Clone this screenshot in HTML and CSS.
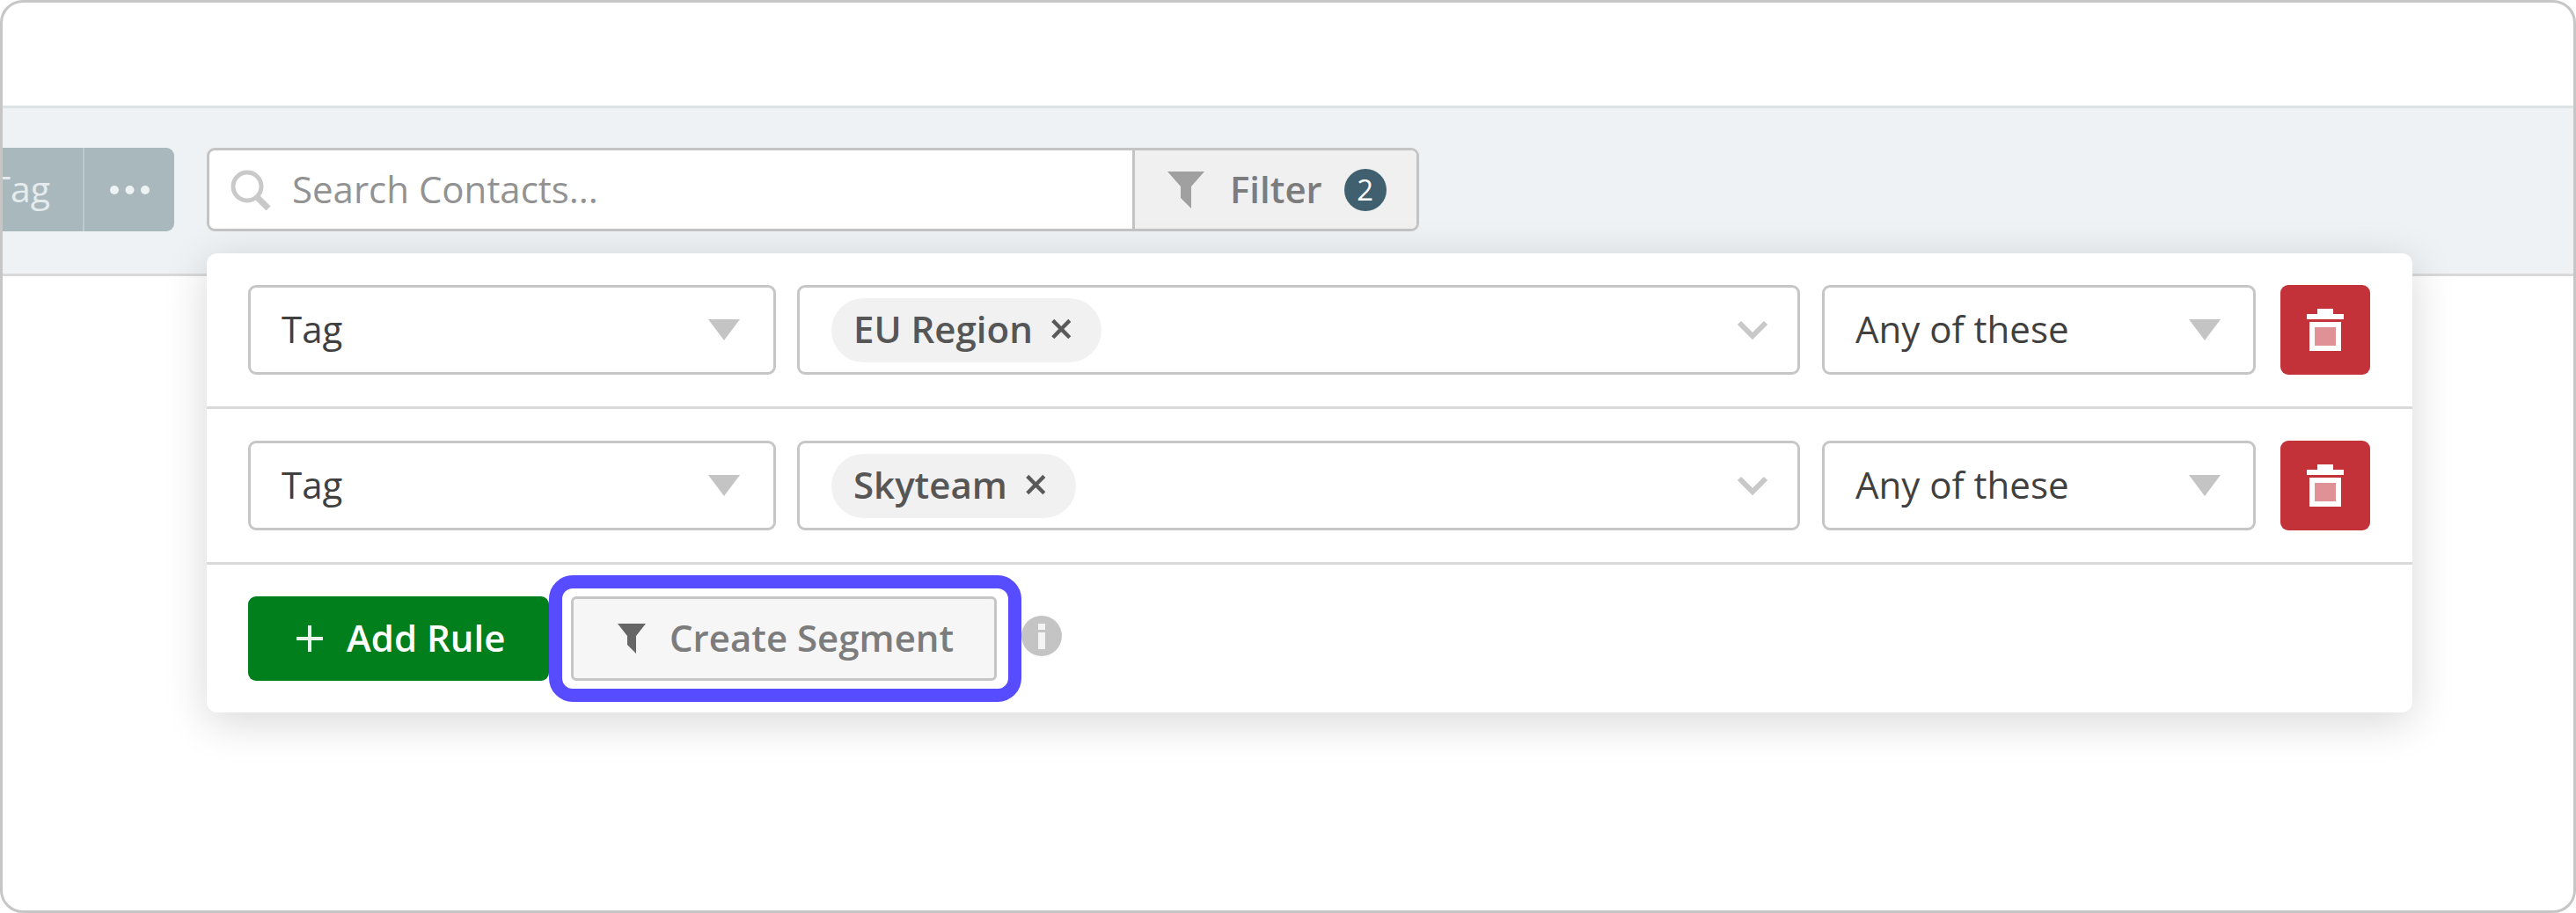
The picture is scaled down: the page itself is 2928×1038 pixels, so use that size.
FILE: index.html
```html
<!DOCTYPE html>
<html lang="en">
<head>
<meta charset="utf-8">
<title>Contacts filter</title>
<link rel="stylesheet" href="styles.css">
</head>
<body>
<div class="frame">
  <div class="top-space"></div>
  <div class="toolbar">
    <div class="bulk-clip">
      <div class="bulk">
        <span class="bulk-tag">Add Tag</span>
        <span class="bulk-more">
          <svg class="dots" viewBox="0 0 45 10"><circle cx="5" cy="5" r="5"/><circle cx="22.5" cy="5" r="5"/><circle cx="40" cy="5" r="5"/></svg>
        </span>
      </div>
    </div>
    <div class="filter-wrap">
      <div class="combo">
        <div class="search">
          <svg class="search-icon" viewBox="0 0 46 46"><circle cx="19" cy="19" r="16" /><path d="M30 31 L43 44" class="handle"/></svg>
          <span class="placeholder">Search Contacts...</span>
        </div>
        <div class="filter-btn">
          <svg class="funnel" viewBox="0 0 42 42"><path d="M0 0H42L27 17V42L15 30V17Z"/></svg>
          <span class="filter-label">Filter</span>
          <span class="badge">2</span>
        </div>
      </div>
      <div class="panel">
        <div class="rule">
          <div class="select type"><span>Tag</span><i class="tri"></i></div>
          <div class="select values">
            <span class="chip">EU Region<b class="chip-x">×</b></span>
            <svg class="chev" viewBox="0 0 36 22"><path d="M3 3 L18 18 L33 3"/></svg>
          </div>
          <div class="select match"><span>Any of these</span><i class="tri"></i></div>
          <div class="trash">
            <svg viewBox="0 0 42 48"><path class="t-w" d="M12 0H30V6H42V12H0V6H12Z"/><rect class="t-w" x="3" y="15" width="36" height="33"/><rect class="t-i" x="9" y="21" width="24" height="21"/></svg>
          </div>
        </div>
        <div class="rule">
          <div class="select type"><span>Tag</span><i class="tri"></i></div>
          <div class="select values">
            <span class="chip">Skyteam<b class="chip-x">×</b></span>
            <svg class="chev" viewBox="0 0 36 22"><path d="M3 3 L18 18 L33 3"/></svg>
          </div>
          <div class="select match"><span>Any of these</span><i class="tri"></i></div>
          <div class="trash">
            <svg viewBox="0 0 42 48"><path class="t-w" d="M12 0H30V6H42V12H0V6H12Z"/><rect class="t-w" x="3" y="15" width="36" height="33"/><rect class="t-i" x="9" y="21" width="24" height="21"/></svg>
          </div>
        </div>
        <div class="footer">
          <div class="add-rule">
            <svg class="plus" viewBox="0 0 30 30"><path d="M13 0H17V13H30V17H17V30H13V17H0V13H13Z"/></svg>
            <span class="btn-text">Add Rule</span>
          </div>
          <div class="highlight">
            <div class="segment">
              <svg class="funnel-sm" viewBox="0 0 32 34"><path d="M0 0H32L21 14V34L11 24V14Z"/></svg>
              <span class="btn-text">Create Segment</span>
            </div>
          </div>
          <svg class="info" viewBox="0 0 46 46"><circle cx="23" cy="23" r="23" class="i-bg"/><rect x="19" y="9" width="8" height="7" class="i-fg"/><rect x="19" y="19" width="8" height="19" class="i-fg"/></svg>
        </div>
      </div>
    </div>
  </div>
</div>
</body>
</html>
```
FILE: styles.css
```css
* { box-sizing: border-box; }
html, body { margin: 0; padding: 0; background: #fff; }
body { font-family: "Open Sans", "Liberation Sans", sans-serif; }

.frame {
  width: 2928px;
  height: 1038px;
  border: 3px solid #c6c6c6;
  border-radius: 26px;
  overflow: hidden;
  background: #fff;
}
.top-space { height: 117px; }

.toolbar {
  height: 194px;
  background: #eef2f4;
  border-top: 3px solid #dde2e5;
  border-bottom: 3px solid #d9d9d9;
  display: flex;
  align-items: flex-start;
  padding-top: 45px;
}

.bulk-clip {
  width: 195px;
  margin-right: 37px;
  overflow: hidden;
  display: flex;
  justify-content: flex-end;
  flex: none;
}
.bulk {
  display: flex;
  flex: none;
  height: 95px;
  background: #a8b8bd;
  border-radius: 0 9px 9px 0;
  color: #e6ecee;
  font-size: 41px;
  align-items: stretch;
}
.bulk-tag { display: flex; align-items: center; padding: 0 37px 4px 40px; white-space: nowrap; }
.bulk-more {
  width: 104px;
  border-left: 2px solid #bcc9cd;
  display: flex;
  align-items: center;
  justify-content: center;
}
.dots { width: 45px; height: 10px; fill: #eef2f3; }

.filter-wrap { position: relative; }
.combo {
  display: flex;
  width: 1378px;
  height: 95px;
  background: #fff;
  border: 3px solid #c4c4c4;
  border-radius: 9px;
  overflow: hidden;
}
.search {
  flex: 1;
  display: flex;
  align-items: center;
  padding-left: 24px;
  gap: 24px;
}
.search-icon { width: 46px; height: 46px; fill: none; stroke: #c9c9c9; stroke-width: 5; }
.search-icon .handle { stroke-width: 7; }
.placeholder { font-size: 42px; color: #929292; white-space: nowrap; padding-bottom: 3px; }
.filter-btn {
  width: 323px;
  flex: none;
  display: flex;
  align-items: center;
  background: #f0f0f0;
  border-left: 3px solid #c4c4c4;
  padding-left: 37px;
  color: #7c7c7c;
  font-size: 42px;
}
.funnel { width: 42px; height: 42px; fill: #a0a0a0; flex: none; }
.filter-label { margin-left: 29px; font-weight: 600; padding-bottom: 3px; }
.badge {
  width: 48px;
  height: 48px;
  margin-left: 25px;
  border-radius: 50%;
  background: #41606f;
  color: #fff;
  font-size: 33px;
  display: flex;
  align-items: center;
  justify-content: center;
}

.panel {
  position: absolute;
  top: 120px;
  left: 0;
  width: 2507px;
  background: #fff;
  border-radius: 12px;
  box-shadow: 0 10px 50px rgba(0, 0, 0, 0.16);
  z-index: 2;
}
.rule {
  display: flex;
  padding: 36px 48px 36px 47px;
  border-bottom: 3px solid #d9d9d9;
}
.select {
  height: 102px;
  border: 3px solid #c6c6c6;
  border-radius: 9px;
  display: flex;
  align-items: center;
  justify-content: space-between;
  font-size: 42px;
  color: #404040;
  flex: none;
}
.select > span:first-child { padding-bottom: 4px; }
.type { width: 600px; padding: 0 38px 0 35px; }
.values { width: 1140px; margin-left: 24px; padding: 0 33px 0 36px; }
.match { width: 493px; margin-left: 25px; padding: 0 37px 0 35px; }
.tri {
  width: 0;
  height: 0;
  border-left: 18px solid transparent;
  border-right: 18px solid transparent;
  border-top: 24px solid #c4c4c4;
}
.chev { width: 36px; height: 22px; fill: none; stroke: #c8c8c8; stroke-width: 6; }
.select > .chip {
  height: 73px;
  padding: 0 32px 0 25px;
  border-radius: 37px;
  background: #f1f1f1;
  color: #565656;
  font-weight: 600;
  display: flex;
  align-items: center;
  white-space: nowrap;
}
.chip-x { margin-left: 18px; font-weight: 600; color: #5a5a5a; font-size: 50px; line-height: 60px; }
.trash {
  width: 102px;
  height: 102px;
  flex: none;
  margin-left: 28px;
  background: #c33238;
  border-radius: 9px;
  display: flex;
  align-items: center;
  justify-content: center;
}
.trash svg { width: 42px; height: 48px; }
.t-w { fill: #fff; }
.t-i { fill: #e09196; }

.footer {
  display: flex;
  align-items: center;
  padding: 12px 0 12px 47px;
}
.add-rule {
  width: 342px;
  height: 96px;
  background: #007f1c;
  border-radius: 9px;
  color: #fff;
  font-size: 42px;
  font-weight: 600;
  display: flex;
  align-items: center;
  padding-left: 55px;
  gap: 27px;
  flex: none;
}
.btn-text { padding-bottom: 3px; }
.plus { width: 30px; height: 30px; fill: #e8f3ea; flex: none; }
.highlight {
  width: 537px;
  height: 144px;
  border: 15px solid #574cff;
  border-radius: 27px;
  padding: 9px 13px 9px 10px;
  flex: none;
}
.segment {
  height: 96px;
  background: #f6f6f6;
  border: 3px solid #c6c6c6;
  border-radius: 6px;
  color: #7c7c7c;
  font-size: 42px;
  font-weight: 600;
  display: flex;
  align-items: center;
  padding-left: 50px;
  gap: 27px;
}
.funnel-sm { width: 32px; height: 34px; fill: #666; flex: none; }
.info { width: 46px; height: 46px; flex: none; margin-left: 0; margin-bottom: 6px; }
.i-bg { fill: #c4c4c4; }
.i-fg { fill: #f4f4f4; }
```
